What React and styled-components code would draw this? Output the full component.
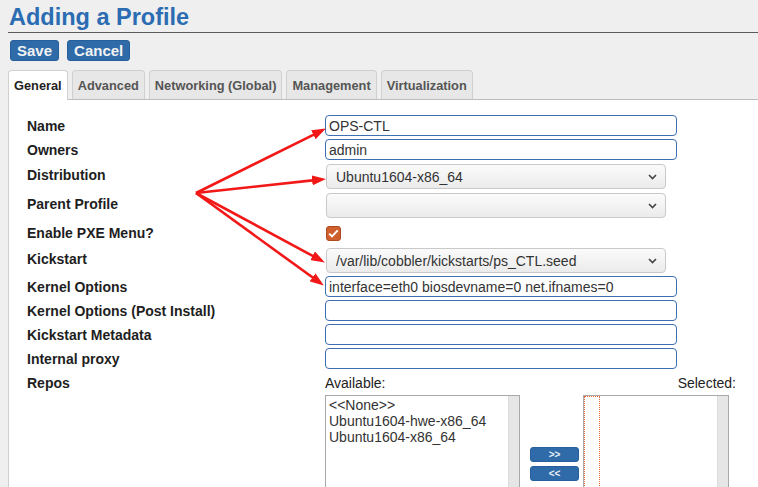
import React from 'react';
import styled, { createGlobalStyle } from 'styled-components';

const GlobalStyle = createGlobalStyle`
  html, body {
    margin: 0;
    padding: 0;
    background: #efefef;
  }
  body {
    font-family: "Liberation Sans", Arial, sans-serif;
    overflow: hidden;
  }
`;

const Page = styled.div`
  position: relative;
  width: 758px;
  height: 487px;
  padding-left: 8px;
  box-sizing: border-box;
  overflow: hidden;
`;

const Title = styled.h1`
  margin: 0;
  padding: 3px 0 1px 1px;
  font-size: 23.5px;
  line-height: 28px;
  font-weight: 700;
  color: #2b6cb3;
  border-bottom: 1px solid #5c5c5c;
`;

const Actions = styled.div`
  display: flex;
  gap: 8px;
  margin: 7px 0 0 2px;
`;

const ActionButton = styled.button`
  height: 21px;
  padding: 0 6px;
  border: 1px solid #25609c;
  border-radius: 3px;
  background: #2f6ba9;
  color: #f2f2f2;
  font: 700 15px/19px "Liberation Sans", Arial, sans-serif;
`;

const TabBar = styled.div`
  display: flex;
  align-items: flex-start;
  height: 29px;
  margin-top: 9px;
  border-bottom: 1px solid #bdbdbd;
`;

const Tab = styled.div`
  height: ${({ active }) => (active ? '30px' : '29px')};
  box-sizing: border-box;
  display: flex;
  align-items: center;
  padding: 0 5px;
  margin-right: 4px;
  border: 1px solid #d0d0d0;
  border-bottom: none;
  border-radius: 4px 4px 0 0;
  background: ${({ active }) => (active ? '#fff' : '#e7e7e7')};
  color: ${({ active }) => (active ? '#1f1f1f' : '#555')};
  font: 700 12.8px/15px "Liberation Sans", Arial, sans-serif;
`;

const Panel = styled.div`
  background: #fff;
  border-left: 1px solid #cfcfcf;
  padding: 15px 0 0 18px;
  height: 400px;
`;

const Row = styled.div`
  display: flex;
  align-items: flex-start;
  height: ${({ h }) => h}px;
`;

const Label = styled.div`
  width: 298px;
  flex: none;
  padding-top: 3px;
  font: 700 14px/17px "Liberation Sans", Arial, sans-serif;
  color: #1e1e1e;
`;

const TextInput = styled.input`
  width: 352px;
  height: 21px;
  box-sizing: border-box;
  margin: 0;
  padding: 0 3px;
  border: 1px solid #3d6fb1;
  border-radius: 4px;
  background: #fff;
  color: #333;
  font: 14px "Liberation Sans", Arial, sans-serif;
  outline: none;
`;

const SelectWrap = styled.div`
  position: relative;
  width: 340px;
  height: 25px;
  margin-left: 1px;
`;

const Select = styled.select`
  appearance: none;
  width: 100%;
  height: 25px;
  box-sizing: border-box;
  margin: 0;
  padding: 0 0 0 9px;
  border: 1px solid #c9c9c9;
  border-radius: 4px;
  background: linear-gradient(#fbfbfb, #ebebeb);
  color: #333;
  font: 14px "Liberation Sans", Arial, sans-serif;
  outline: none;
`;

const Chevron = styled.svg`
  position: absolute;
  right: 9px;
  top: 10px;
  pointer-events: none;
`;

const Check = styled.span`
  display: flex;
  align-items: center;
  justify-content: center;
  width: 15px;
  height: 15px;
  box-sizing: border-box;
  margin: 4px 0 0 1px;
  border: 1px solid #ad4a1e;
  border-radius: 3px;
  background: #cf5f2c;
`;

const Repos = styled.div`
  width: 411px;
`;

const RepoHead = styled.div`
  display: flex;
  justify-content: space-between;
  padding-top: 3px;
  font: 14px/17px "Liberation Sans", Arial, sans-serif;
  color: #222;
`;

const ListRow = styled.div`
  display: flex;
  align-items: flex-start;
  margin-top: 3px;
`;

const ListBox = styled.div`
  display: flex;
  width: ${({ w }) => w}px;
  height: 120px;
  box-sizing: border-box;
  border: 1px solid #a9a9a9;
  background: #fff;
`;

const ListItems = styled.div`
  flex: 1;
  padding: 1px 3px;
  font: 14px/16px "Liberation Sans", Arial, sans-serif;
  color: #333;
`;

const FocusedOption = styled.div`
  width: 16px;
  box-sizing: border-box;
  border: 1px dotted #ec6a3c;
`;

const Track = styled.div`
  width: 10px;
  flex: none;
  background: #e6e6e6;
  border-left: 1px solid #dcdcdc;
`;

const Movers = styled.div`
  display: flex;
  flex-direction: column;
  gap: 4px;
  padding-top: 52px;
  margin: 0 4px 0 10px;
`;

const MoveButton = styled.button`
  width: 49px;
  height: 15px;
  padding: 0;
  border: 1px solid #25609c;
  border-radius: 3px;
  background: #2f6ba9;
  color: #e9eef5;
  font: 700 10px/13px "Liberation Sans", Arial, sans-serif;
`;

const Overlay = styled.svg`
  position: absolute;
  left: 0;
  top: 0;
  pointer-events: none;
`;

const origin = [196, 193];
const tips = [
  [325, 129],
  [325, 179],
  [324, 262],
  [323, 285],
];

function shorten([x, y]) {
  const dx = x - origin[0];
  const dy = y - origin[1];
  const len = Math.hypot(dx, dy);
  return [x - (dx / len) * 8, y - (dy / len) * 8];
}

function SelectField({ value }) {
  return (
    <SelectWrap>
      <Select defaultValue={value}>
        <option>{value}</option>
      </Select>
      <Chevron width="9" height="6" viewBox="0 0 9 6">
        <path d="M1 1 L4.5 4.5 L8 1" fill="none" stroke="#444" strokeWidth="1.6" />
      </Chevron>
    </SelectWrap>
  );
}

export default function App() {
  return (
    <Page>
      <GlobalStyle />
      <Title>Adding a Profile</Title>
      <Actions>
        <ActionButton>Save</ActionButton>
        <ActionButton>Cancel</ActionButton>
      </Actions>
      <TabBar>
        <Tab active>General</Tab>
        <Tab>Advanced</Tab>
        <Tab>Networking (Global)</Tab>
        <Tab>Management</Tab>
        <Tab>Virtualization</Tab>
      </TabBar>
      <Panel>
        <Row h={24}>
          <Label>Name</Label>
          <TextInput defaultValue="OPS-CTL" />
        </Row>
        <Row h={25}>
          <Label>Owners</Label>
          <TextInput defaultValue="admin" />
        </Row>
        <Row h={29}>
          <Label>Distribution</Label>
          <SelectField value="Ubuntu1604-x86_64" />
        </Row>
        <Row h={29}>
          <Label>Parent Profile</Label>
          <SelectField value="" />
        </Row>
        <Row h={26}>
          <Label>Enable PXE Menu?</Label>
          <Check>
            <svg width="11" height="9" viewBox="0 0 11 9">
              <path d="M1.2 4.6 L4 7.4 L9.8 1.4" fill="none" stroke="#fff" strokeWidth="2" />
            </svg>
          </Check>
        </Row>
        <Row h={28}>
          <Label>Kickstart</Label>
          <SelectField value="/var/lib/cobbler/kickstarts/ps_CTL.seed" />
        </Row>
        <Row h={24}>
          <Label>Kernel Options</Label>
          <TextInput defaultValue="interface=eth0 biosdevname=0 net.ifnames=0" />
        </Row>
        <Row h={24}>
          <Label>Kernel Options (Post Install)</Label>
          <TextInput />
        </Row>
        <Row h={24}>
          <Label>Kickstart Metadata</Label>
          <TextInput />
        </Row>
        <Row h={24}>
          <Label>Internal proxy</Label>
          <TextInput />
        </Row>
        <Row h={140}>
          <Label>Repos</Label>
          <Repos>
            <RepoHead>
              <span>Available:</span>
              <span>Selected:</span>
            </RepoHead>
            <ListRow>
              <ListBox w={195}>
                <ListItems>
                  <div>&lt;&lt;None&gt;&gt;</div>
                  <div>Ubuntu1604-hwe-x86_64</div>
                  <div>Ubuntu1604-x86_64</div>
                </ListItems>
                <Track />
              </ListBox>
              <Movers>
                <MoveButton>&gt;&gt;</MoveButton>
                <MoveButton>&lt;&lt;</MoveButton>
              </Movers>
              <ListBox w={146}>
                <FocusedOption />
                <ListItems />
                <Track />
              </ListBox>
            </ListRow>
          </Repos>
        </Row>
      </Panel>
      <Overlay width="758" height="487" viewBox="0 0 758 487">
        <defs>
          <marker id="head" markerUnits="userSpaceOnUse" markerWidth="14" markerHeight="10" refX="5" refY="5" orient="auto">
            <path d="M0 0 L14 5 L0 10 Z" fill="#f21818" />
          </marker>
        </defs>
        {tips.map((tip, i) => {
          const [x, y] = shorten(tip);
          return (
            <line key={i} x1={origin[0]} y1={origin[1]} x2={x} y2={y}
              stroke="#f21818" strokeWidth="2.6" markerEnd="url(#head)" />
          );
        })}
      </Overlay>
    </Page>
  );
}
